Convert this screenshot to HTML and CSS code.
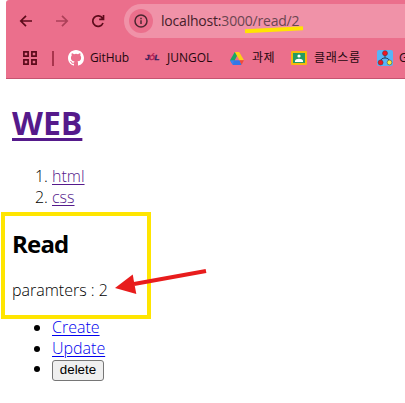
FILE: index.html
```html
<!DOCTYPE html>
<html lang="ko">
<head>
<meta charset="utf-8">
<title>WEB</title>
<link rel="stylesheet" href="styles.css">
</head>
<body>
<header class="browser">
  <div class="toolbar">
    <svg class="nav" viewBox="0 0 14 14"><path d="M13 7H2M7 1.8 1.8 7 7 12.2"/></svg>
    <svg class="nav dim" viewBox="0 0 14 14"><path d="M1 7h11M7 1.8 12.2 7 7 12.2"/></svg>
    <svg class="nav" viewBox="0 0 14 14"><path d="M12 9A5.3 5.3 0 1 1 11.5 4.2L12.4 5.2M12.5 1V5.3H8.2"/></svg>
    <div class="address">
      <span class="info"><svg width="14" height="14" viewBox="0 0 14 14"><circle cx="7" cy="7" r="6"/><path d="M7 6.2V10M7 3.7V5.2"/></svg></span>
      <span class="url"><span class="host">localhost:</span>3000/read/2</span>
    </div>
  </div>
  <nav class="bookmarks">
    <svg class="apps" width="14" height="14" viewBox="0 0 14 14"><path d="M.9.9h4.2v4.2H.9zM8.9.9h4.2v4.2H8.9zM.9 8.9h4.2v4.2H.9zM8.9 8.9h4.2v4.2H8.9z"/></svg>
    <span class="divider"></span>
    <span class="bookmark github"><svg width="16" height="16" viewBox="0 0 16 16"><path fill="#fff" d="M8 0C3.58 0 0 3.58 0 8c0 3.54 2.29 6.53 5.47 7.59.4.07.55-.17.55-.38 0-.19-.01-.82-.01-1.49-2.01.37-2.53-.49-2.69-.94-.09-.23-.48-.94-.82-1.13-.28-.15-.68-.52-.01-.53.63-.01 1.08.58 1.23.82.72 1.21 1.87.87 2.33.66.07-.52.28-.87.51-1.07-1.78-.2-3.64-.89-3.64-3.95 0-.87.31-1.59.82-2.15-.08-.2-.36-1.02.08-2.12 0 0 .67-.21 2.2.82a7.42 7.42 0 0 1 4 0c1.53-1.04 2.2-.82 2.2-.82.44 1.1.16 1.92.08 2.12.51.56.82 1.27.82 2.15 0 3.07-1.87 3.75-3.65 3.95.29.25.54.73.54 1.48 0 1.07-.01 1.93-.01 2.2 0 .21.15.46.55.38A8.01 8.01 0 0 0 16 8c0-4.42-3.58-8-8-8z"/></svg><span class="label">GitHub</span></span>
    <span class="bookmark jungol"><span class="jol">J<span class="accent">Ó</span>L</span><span class="label">JUNGOL</span></span>
    <span class="bookmark drive"><svg width="14" height="13" viewBox="0 0 14 13"><path fill="#18a762" d="M4.8 0H7v4L2.6 12.3 0 8.3z"/><path fill="#ffcf16" d="M4.8 0h4.4L14 8.3H9.5z"/><path fill="#3982f6" d="M0 8.3h4.5L2.5 12.8z"/><path fill="#3277e8" d="M4.5 8.3h5l2 4.7h-9z"/><path fill="#f14a39" d="M9.5 8.3H14l-2.5 4.5z"/></svg><span class="label">과제</span></span>
    <span class="bookmark classroom"><svg width="16" height="14" viewBox="0 0 16 14"><rect width="16" height="14" rx="1" fill="#f8b90c"/><path fill="#259b62" d="M2 2h12v10H2z"/><circle cx="8" cy="5" r="1.6" fill="#fff"/><path fill="#fff" d="M4 10c0-3 8-3 8 0v1H4z"/></svg><span class="label">클래스룸</span></span>
    <span class="bookmark graph"><svg width="16" height="16" viewBox="0 0 16 16"><rect width="16" height="16" rx="2" fill="#57b5f7"/><path d="M8 4v4M3.5 12Q3.5 8 8 8t4.5 4" fill="none" stroke="#26445d"/><g stroke="#51333b" stroke-width=".5"><circle cx="8" cy="3.2" r="2.5" fill="#ef1620"/><circle cx="3.6" cy="12.5" r="2.5" fill="#ef1620"/><circle cx="12.5" cy="12.5" r="2.4" fill="#f4ed38"/></g></svg><span class="label">G</span></span>
  </nav>
</header>
<main>
  <h1><a href="#">WEB</a></h1>
  <ol class="topics">
    <li><a href="#">html</a></li>
    <li><a href="#">css</a></li>
  </ol>
  <h2>Read</h2>
  <p>paramters : 2</p>
  <ul class="actions">
    <li><a href="#">Create</a></li>
    <li><a href="#">Update</a></li>
    <li><button>delete</button></li>
  </ul>
</main>
<svg class="marks" width="405" height="403" viewBox="0 0 405 403">
  <path class="yellow" d="M245 31.2 303 28.2"/>
  <rect class="yellow" x="3" y="214" width="146" height="103"/>
  <path d="M134 284 206 271" stroke="#e81c1c" stroke-width="4" fill="none"/>
  <path d="M115 288 132.7 274.5 136.3 294z" fill="#e81c1c"/>
</svg>
</body>
</html>
```
FILE: styles.css
```css
* { box-sizing: border-box; }
body {
  margin: 0;
  height: 403px;
  overflow: hidden;
  position: relative;
  background: #fff;
  color: #000;
  font: 330 16px/21px "Open Sans", "Noto Sans CJK KR", sans-serif;
}
.browser {
  height: 79px;
  margin-left: 6px;
  padding-top: 4px;
  overflow: hidden;
  background: #eb6f8c;
  border-bottom: 1px solid #c65370;
  border-top-left-radius: 3px;
}
.toolbar {
  display: flex;
  align-items: center;
  height: 34px;
  padding-left: 13px;
}
.nav {
  flex: none;
  width: 14px;
  height: 14px;
  margin-right: 22px;
  fill: none;
  stroke: #5d0b1b;
  stroke-width: 1.7;
}
.nav.dim { stroke: #ac4058; }
.nav:nth-of-type(3) { margin-right: 19px; }
.address {
  flex: 1;
  display: flex;
  align-items: center;
  height: 34px;
  padding-left: 5px;
  border-radius: 17px 0 0 17px;
  background: #f092a8;
}
.info {
  display: grid;
  place-items: center;
  width: 24px;
  height: 24px;
  margin-right: 8px;
  border-radius: 50%;
  background: #eb6f8c;
}
.info svg { fill: none; stroke: #4d2630; stroke-width: 1.5; }
.url { font-size: 14px; font-weight: 380; letter-spacing: -.2px; color: #6b4550; white-space: nowrap; position: relative; top: -1px; }
.host { color: #46202a; }
.bookmarks {
  display: flex;
  align-items: center;
  height: 40px;
  padding-left: 17px;
  white-space: nowrap;
  font-size: 12px;
  font-weight: 380;
  color: #24070e;
}
.apps { flex: none; fill: none; stroke: #5d0b1b; stroke-width: 1.7; }
.divider { flex: none; width: 2px; height: 15px; margin: 0 14px 0 15px; background: #a8354d; }
.bookmark { flex: none; display: flex; align-items: center; }
.bookmark svg { flex: none; }
.label { margin-left: 6px; position: relative; top: -1px; }
.github { width: 77px; }
.github .label { letter-spacing: -.1px; }
.jungol { width: 85px; }
.jungol .label { margin-left: 7px; }
.jol { width: 15px; font: italic bold 8px/12px "Liberation Sans", sans-serif; color: #35205c; letter-spacing: -.6px; -webkit-text-stroke: .3px; }
.accent { color: #b31e53; }
.drive { width: 61px; }
.drive .label { margin-left: 8px; letter-spacing: .4px; }
.classroom { width: 86px; }
.classroom .label { margin-left: 7px; letter-spacing: .6px; }
main { padding-left: 12px; }
h1 { margin: 24px 0 23px; font-size: 32px; line-height: 40px; font-weight: 700; }
h1 a { text-decoration-thickness: 3px; text-underline-offset: 3px; }
a { color: #00e; text-underline-offset: 2px; text-decoration-thickness: 1px; }
h1 a, .topics a { color: #551a8b; }
ol, ul { margin: 0; padding-left: 40px; }
h2 { margin: 20px 0 20px; font-size: 24px; line-height: 32px; font-weight: 700; letter-spacing: -.8px; }
p { margin: 0 0 16px; }
.actions button {
  display: block;
  width: 52px;
  height: 21px;
  padding: 0;
  margin-top: -1px;
  border: 1px solid #767676;
  border-radius: 3px;
  background: #efefef;
  font: 13.33px/18px "Liberation Sans", sans-serif;
}
.marks { position: absolute; left: 0; top: 0; pointer-events: none; }
.yellow { fill: none; stroke: #ffe500; stroke-width: 4; }
```
